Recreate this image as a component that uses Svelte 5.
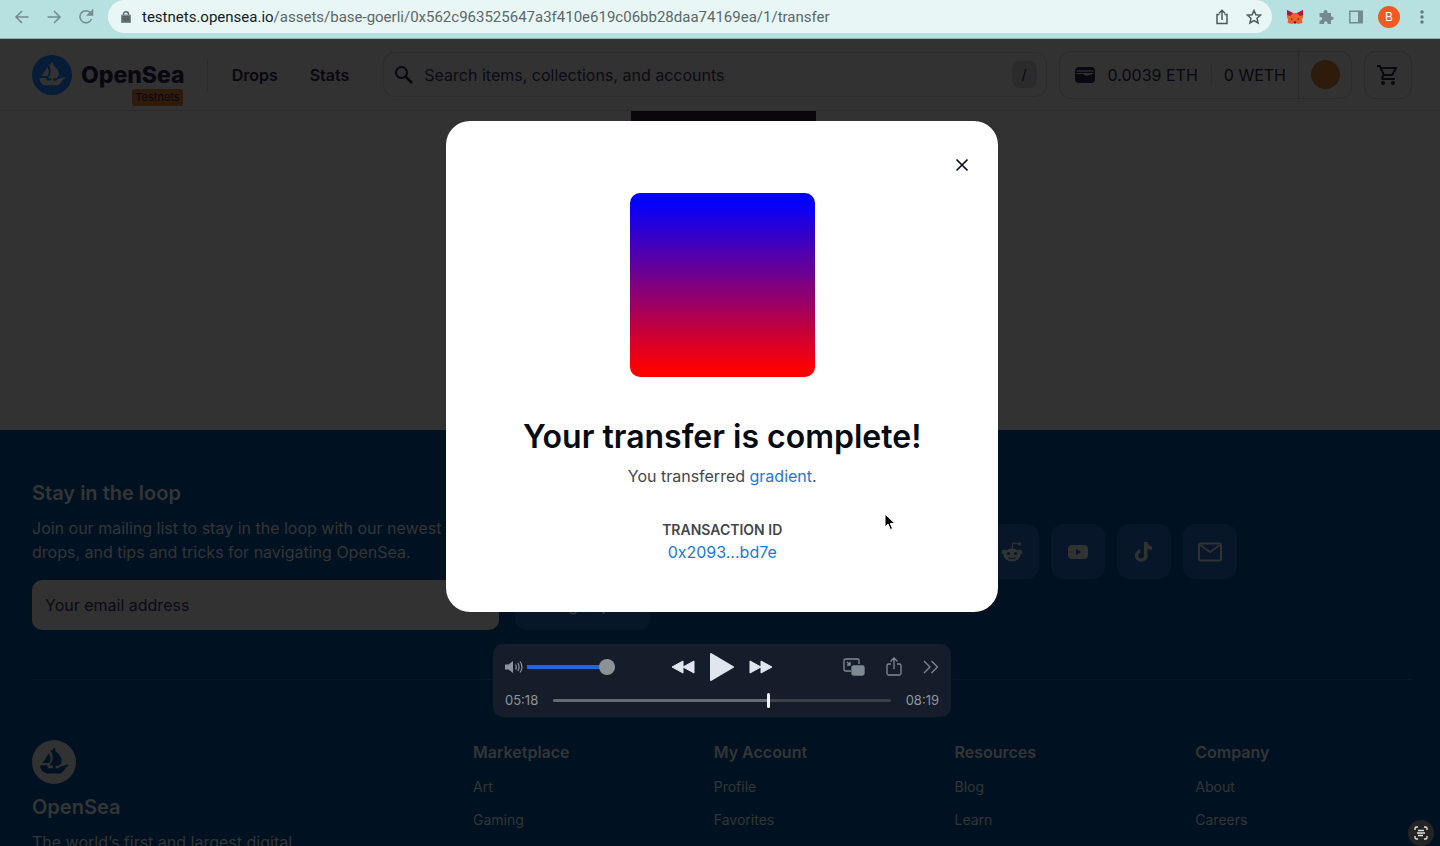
<script>
	const host = 'testnets.opensea.io';
	const path = '/assets/base-goerli/0x562c963525647a3f410e619c06bb28daa74169ea/1/transfer';

	const columns = [
		{ title: 'Marketplace', links: ['Art', 'Gaming'] },
		{ title: 'My Account', links: ['Profile', 'Favorites'] },
		{ title: 'Resources', links: ['Blog', 'Learn'] },
		{ title: 'Company', links: ['About', 'Careers'] },
	];

	let volume = 100;
	let search = '';
	let email = '';
</script>

{#snippet ship()}
	<circle cx="45" cy="45" r="45" fill="var(--disc)" />
	<g fill="var(--boat)">
		<path d="M22.2 46.5l.2-.3 11.7-18.3c.2-.3.6-.2.8.1 1.9 4.4 3.6 9.8 2.8 13.2-.3 1.4-1.3 3.3-2.3 5.1l-.5.7c-.1.1-.2.2-.4.2H22.6c-.4 0-.6-.4-.4-.7z" />
		<path d="M74.4 49.9v2.8c0 .2-.1.3-.2.4-.9.4-4.2 1.9-5.500 3.7-3.4 4.7-6 11.500-11.800 11.500H32.600C24 68.300 17 61.300 17 52.600v-.3c0-.2.2-.4.400-.4H31c.3 0 .5.200.5.500-.1.900.1 1.800.5 2.600.8 1.600 2.400 2.600 4.200 2.600h6.700v-5.200h-6.600c-.3 0-.5-.4-.3-.7l.8-1.100c.6-.9 1.500-2.300 2.400-3.900.6-1.100 1.200-2.200 1.700-3.300.9-2 1.400-4.500 1.400-7 0-5.700-2-11.600-4.800-16.200l5.400 1.500v-2.800c0-1.400 1.100-2.600 2.500-2.600s2.500 1.200 2.500 2.600v4.200c6.800 4.700 12.800 12.100 12.800 19.500 0 4.500-3.500 8.600-5.800 9.900h-6.900v5.200h5.300c1.200 0 3.400-2.100 4.400-3.500l14.600-4.300c.3-.1.500.1.500.4z" />
	</g>
{/snippet}

<div class="browser">
	<nav class="browser-nav" aria-label="Browser">
		<button aria-label="Back">
			<svg width="16" height="16" viewBox="0 0 16 16"><path d="M14.500 8H2M8 2L2 8l6 6" /></svg>
		</button>
		<button aria-label="Forward">
			<svg width="16" height="16" viewBox="0 0 16 16"><path d="M1.500 8H14M8 2l6 6-6 6" /></svg>
		</button>
		<button aria-label="Reload">
			<svg width="16" height="16" viewBox="0 0 16 16"><path d="M13.500 10A6 6 0 1 1 12.600 4l1.400 1.800M14.500 1.500V6H10z" /></svg>
		</button>
	</nav>
	<div class="address">
		<svg class="lock" width="10" height="12" viewBox="0 0 10 12">
			<path d="M2.500 5V3.200a2.500 2.500 0 0 1 5 0V5" fill="none" stroke="#596466" stroke-width="1.400" />
			<rect x=".5" y="4.200" width="9" height="7.300" rx="1" fill="#596466" />
		</svg>
		<div class="url"><b>{host}</b>{path}</div>
		<button aria-label="Share page">
			<svg width="16" height="16" viewBox="0 0 16 16"><path d="M5.500 5.500H3v9h10v-9h-2.500M8 11V1.500M5 4.200l3-3 3 3" /></svg>
		</button>
		<button aria-label="Bookmark this page">
			<svg width="16" height="16" viewBox="0 0 16 16"><path d="M8 1.500l1.900 4.300 4.600.4-3.500 3.100 1.100 4.600L8 11.500l-4.100 2.400L5 9.300 1.500 6.200l4.600-.4z" /></svg>
		</button>
	</div>
	<div class="extensions">
		<button aria-label="Wallet extension">
			<svg width="18" height="16" viewBox="0 0 18 16">
				<path d="M1 1l6 3h4l6-3v7l-1 3 .5 3-4.500 1-2-1H8l-2 1-4.500-1 .5-3-1-3z" fill="#f0602b" stroke="none" />
				<path d="M1 1l6 3-3 3-3-1zM17 1l-6 3 3 3 3-1z" fill="#b3134c" stroke="none" />
				<path d="M5 9l2 1.500-2 .3zM13 9l-2 1.500 2 .3zM7.500 12.500h3L10 14.500H8z" fill="#3b2430" stroke="none" />
			</svg>
		</button>
		<button aria-label="Extensions">
			<svg width="16" height="16" viewBox="0 0 16 16"><path d="M1.500 4h4V3a2 2 0 0 1 4 0v1H13v3.500h.8a1.800 1.800 0 0 1 0 3.600H13V15H9.500v-1a1.700 1.700 0 0 0-3.400 0v1H1.500v-3.600h1a1.700 1.700 0 0 0 0-3.400h-1z" fill="#748a90" stroke="none" /></svg>
		</button>
		<button aria-label="Side panel">
			<svg width="16" height="16" viewBox="0 0 16 16"><path d="M1.800 2.200h12.400v11.600H1.800z" /><path d="M10 2h4.500v12H10z" fill="#748a90" stroke="none" /></svg>
		</button>
		<button class="profile" aria-label="Profile B">B</button>
		<button aria-label="Browser menu">
			<svg width="16" height="16" viewBox="0 0 16 16"><g fill="#627980" stroke="none"><circle cx="8" cy="3" r="1.700" /><circle cx="8" cy="8" r="1.700" /><circle cx="8" cy="13" r="1.700" /></g></svg>
		</button>
	</div>
</div>

<div class="page">
	<header>
		<a class="brand" href="#home">
			<svg class="header-ship" width="40" height="40" viewBox="0 0 90 90">{@render ship()}</svg>
			<span class="wordmark">OpenSea</span>
			<span class="badge">Testnets</span>
		</a>
		<nav class="site-nav" aria-label="Main">
			<a href="#drops">Drops</a>
			<a href="#stats">Stats</a>
		</nav>
		<div class="search">
			<svg width="20" height="20" viewBox="0 0 20 20" fill="none" stroke="#09070f" stroke-width="2"><circle cx="7.500" cy="7.500" r="5.500" /><path d="M11.500 11.500l6.500 6.500" stroke-width="2.500" /></svg>
			<input type="text" aria-label="Search" placeholder="Search items, collections, and accounts" bind:value={search} />
			<kbd>/</kbd>
		</div>
		<div class="wallet">
			<button class="balances">
				<svg width="20" height="16" viewBox="0 0 20 16"><rect width="20" height="16" rx="4" fill="#09070f" /><path d="M1.500 4h17" fill="none" stroke="#323232" stroke-width="1.300" /><path d="M1.500 6h17v.8L13 8.600q-2 .6-3.500-.5Q8.500 7 7 7H1.500z" fill="#323232" /></svg>
				<span>0.0039 ETH</span>
				<span class="weth">0 WETH</span>
			</button>
			<button class="account" aria-label="Account"><span class="avatar"></span></button>
		</div>
		<button class="cart" aria-label="Cart">
			<svg width="24" height="24" viewBox="0 0 24 24" fill="#09070f"><path d="M15.550 13c.75 0 1.410-.41 1.750-1.030l3.580-6.490A.996.996 0 0 0 20.010 4H5.210l-.94-2H1v2h2l3.600 7.590-1.350 2.440C4.520 15.370 5.480 17 7 17h12v-2H7l1.100-2h7.450zM6.160 6h12.150l-2.760 5H8.530L6.160 6zM7 18c-1.100 0-1.990.9-1.990 2S5.900 22 7 22s2-.9 2-2-.9-2-2-2zm10 0c-1.100 0-1.990.9-1.990 2s.89 2 1.990 2 2-.9 2-2-.9-2-2-2z" /></svg>
		</button>
	</header>

	<main><div class="artwork"></div></main>

	<footer>
		<div class="community">
			<form class="newsletter" onsubmit={(event) => event.preventDefault()}>
				<h2>Stay in the loop</h2>
				<p>Join our mailing list to stay in the loop with our newest feature releases, NFT drops, and tips and tricks for navigating OpenSea.</p>
				<div class="signup">
					<input type="email" aria-label="Your email address" placeholder="Your email address" bind:value={email} />
					<button>Sign up</button>
				</div>
			</form>
			<div class="socials">
				<a href="#reddit" aria-label="Reddit">
					<svg width="24" height="24" viewBox="0 0 24 24">
						<path d="M12 9l1-6 6 1" fill="none" stroke="#323232" stroke-width="1.200" />
						<circle cx="19.500" cy="4" r="1.800" />
						<circle cx="4" cy="12" r="2.400" /><circle cx="20" cy="12" r="2.400" />
						<ellipse cx="12" cy="15" rx="8.500" ry="6.500" />
						<g fill="#071628"><circle cx="8.500" cy="13.500" r="1.600" /><circle cx="15.500" cy="13.500" r="1.600" /></g>
						<path d="M8.500 17.500q3.500 2.500 7 0" fill="none" stroke="#071628" stroke-width="1.200" />
					</svg>
				</a>
				<a href="#youtube" aria-label="YouTube">
					<svg width="24" height="24" viewBox="0 0 24 24"><rect x="2" y="5" width="20" height="14" rx="4" /><path d="M10 9l5 3-5 3z" fill="#071628" /></svg>
				</a>
				<a href="#tiktok" aria-label="TikTok">
					<svg width="24" height="24" viewBox="0 0 24 24"><path d="M12 2h3.500c.2 2.500 2 4.300 4.500 4.500V10c-1.700 0-3.200-.5-4.500-1.400V15.500a6.300 6.300 0 1 1-7.200-6.200v3.600a2.900 2.900 0 1 0 3.700 2.700z" /></svg>
				</a>
				<a href="#mail" aria-label="Mail">
					<svg width="26" height="20" viewBox="0 0 26 20" fill="none" stroke="#323232" stroke-width="2"><rect x="2" y="1.500" width="22" height="17" rx="1" /><path d="M3 3l10 7 10-7" /></svg>
				</a>
			</div>
		</div>
		<div class="directory">
			<section class="about">
				<svg class="footer-ship" width="44" height="44" viewBox="0 0 90 90">{@render ship()}</svg>
				<h2>OpenSea</h2>
				<p>The world’s first and largest digital</p>
			</section>
			{#each columns as column}
				<section class="column">
					<h3>{column.title}</h3>
					<ul>
						{#each column.links as link}
							<li><a href="#{link.toLowerCase()}">{link}</a></li>
						{/each}
					</ul>
				</section>
			{/each}
		</div>
	</footer>

	<div class="modal" role="dialog" aria-labelledby="modal-title">
		<button class="close" aria-label="Close">
			<svg width="14" height="14" viewBox="0 0 14 14"><path d="M1.500 1.500l11 11M12.500 1.500l-11 11" stroke="#04111d" stroke-width="1.700" /></svg>
		</button>
		<div class="gradient"></div>
		<h1 id="modal-title">Your transfer is complete!</h1>
		<p>You transferred <a href="#gradient">gradient</a>.</p>
		<h4>TRANSACTION ID</h4>
		<a class="hash" href="#transaction">0x2093...bd7e</a>
	</div>

	<div class="player">
		<div class="controls">
			<div class="volume">
				<svg width="18" height="14" viewBox="0 0 18 14"><path d="M0 4.500h3.500L8 1v12L3.500 9.500H0z" fill="#8d959c" /><path d="M10.500 4.500q1.500 2.500 0 5M12.800 3q2.500 4 0 8M15 1.500q4 5.500 0 11" fill="none" stroke="#8d959c" stroke-width="1.200" /></svg>
				<input type="range" aria-label="Volume" bind:value={volume} />
			</div>
			<div class="transport">
				<button aria-label="Rewind"><svg width="24" height="14" viewBox="0 0 24 14"><path d="M12 1v12L1 7zM23 1v12L12 7z" stroke-width="1" /></svg></button>
				<button aria-label="Play"><svg width="26" height="30" viewBox="0 0 26 30"><path d="M2 2v26l22-13z" stroke-width="2" /></svg></button>
				<button aria-label="Fast forward"><svg width="24" height="14" viewBox="0 0 24 14"><path d="M1 1v12l11-6zM12 1v12l11-6z" stroke-width="1" /></svg></button>
			</div>
			<div class="tools">
				<button aria-label="Picture in picture"><svg width="22" height="18" viewBox="0 0 22 18"><path d="M8 13H2.500A1.500 1.500 0 0 1 1 11.500v-9A1.500 1.500 0 0 1 2.500 1h12A1.500 1.500 0 0 1 16 2.500V6M4 4l3 3M7 4v3H4" /><rect x="9" y="8" width="12" height="9" rx="1.500" fill="#7f8a92" /></svg></button>
				<button aria-label="Share"><svg width="16" height="20" viewBox="0 0 16 20"><path d="M5 7H2.500A1.500 1.500 0 0 0 1 8.500v8A1.500 1.500 0 0 0 2.500 18h11a1.500 1.500 0 0 0 1.500-1.500v-8A1.500 1.500 0 0 0 13.500 7H11M8 12V1M4.500 4.500L8 1l3.500 3.500" /></svg></button>
				<button aria-label="More"><svg width="16" height="14" viewBox="0 0 16 14"><path d="M1 1l6 6-6 6M8.500 1l6 6-6 6" /></svg></button>
			</div>
		</div>
		<div class="timeline">
			<time>05:18</time>
			<div class="track" role="progressbar" aria-label="Elapsed" aria-valuenow="318" aria-valuemax="499"><span style="width: {318 / 499 * 100}%"></span></div>
			<time>08:19</time>
		</div>
	</div>

	<svg class="cursor" width="12" height="18" viewBox="0 0 12 18"><path d="M1 1v13l3-3 2.300 5.500 2.200-1L6.300 10.500H11z" fill="#000" stroke="#fff" /></svg>
	<button class="scan" aria-label="Scan text">
		<svg width="14" height="14" viewBox="0 0 14 14" fill="none" stroke="#e0e0e0" stroke-width="1.400"><path d="M1 4V2.500A1.500 1.500 0 0 1 2.500 1H4M10 1h1.500A1.500 1.500 0 0 1 13 2.500V4M13 10v1.500a1.500 1.500 0 0 1-1.500 1.500H10M4 13H2.500A1.500 1.500 0 0 1 1 11.500V10M4 4.500h6M3 7h8M4 9.500h5" /></svg>
	</button>
</div>

<style>
	:global(body) {
		background: #323232;
		overflow: hidden;
	}

	:global(#app) {
		height: 100vh;
		display: flex;
		flex-direction: column;
		font-family: Inter, "Open Sans", sans-serif;
		overflow: hidden;
	}

	:global(#app *) {
		box-sizing: border-box;
	}

	button, input {
		font: inherit;
		color: inherit;
		border: 0;
		padding: 0;
		background: none;
	}

	button {
		display: flex;
		align-items: center;
		justify-content: center;
	}

	a {
		color: inherit;
		text-decoration: none;
	}

	h1, h2, h3, h4, p, ul {
		margin: 0;
		padding: 0;
		list-style: none;
	}

	svg {
		display: block;
		flex: none;
	}

	.browser {
		height: 39px;
		flex: none;
		display: flex;
		padding: 0 10px 5px 14px;
		background: #b7e0e1;
		border-bottom: 1px solid #8eb0b0;
	}

	.browser svg {
		fill: none;
		stroke: #748a90;
		stroke-width: 1.5;
	}

	.browser-nav {
		display: flex;
		align-items: center;
		gap: 16px;
	}

	.address {
		flex: 1;
		display: flex;
		align-items: center;
		gap: 16px;
		margin: 0 14px;
		padding: 0 10px 0 13px;
		border-radius: 17px;
		background: #e9f6f6;
	}

	.address button svg {
		stroke: #4d595c;
	}

	.address .lock {
		margin-right: -5px;
	}

	.url {
		flex: 1;
		font-family: Roboto, sans-serif;
		font-size: 15px;
		color: #5b686a;
		white-space: nowrap;
	}

	.url b {
		font-weight: 400;
		color: #151b1c;
	}

	.extensions {
		display: flex;
		align-items: center;
		gap: 14px;
	}

	.extensions .profile {
		width: 22px;
		height: 22px;
		border-radius: 50%;
		background: #f05a22;
		color: #fff;
		font-size: 12px;
	}

	.page {
		position: relative;
		flex: 1;
		min-height: 0;
		display: flex;
		flex-direction: column;
	}

	header {
		height: 72px;
		flex: none;
		display: flex;
		align-items: center;
		padding: 0 28px 0 32px;
		border-bottom: 1px solid #2c2c2c;
		color: #09070f;
	}

	.brand {
		position: relative;
		display: flex;
		align-items: center;
		gap: 9px;
		padding-right: 22px;
		border-right: 1px solid #2b2b2b;
		height: 32px;
	}

	.header-ship {
		--disc: #071c36;
		--boat: #323232;
	}

	.wordmark {
		font-size: 23px;
		font-weight: 800;
	}

	.badge {
		position: absolute;
		right: 24px;
		top: 30px;
		padding: 0 3px;
		border-radius: 3px;
		background: #2f1b0c;
		font-size: 11px;
		line-height: 17px;
	}

	.site-nav {
		display: flex;
		gap: 32px;
		padding: 0 34px 0 24px;
		font-size: 16px;
		font-weight: 600;
	}

	.search {
		flex: 1;
		display: flex;
		align-items: center;
		gap: 10px;
		height: 45px;
		margin-right: 12px;
		padding: 0 9px 0 10px;
		border: 1px solid #2c2c2c;
		border-radius: 12px;
	}

	.search input {
		flex: 1;
		min-width: 0;
		font-size: 16px;
	}

	input::placeholder {
		color: #0c0a14;
		opacity: 1;
	}

	kbd {
		width: 25px;
		border-radius: 8px;
		background: #2b2b2b;
		font: 14px/27px Inter, sans-serif;
		text-align: center;
	}

	.wallet {
		display: flex;
		height: 48px;
		margin-right: 12px;
		border: 1px solid #2b2b2b;
		border-radius: 12px;
		font-size: 16px;
	}

	.balances {
		gap: 13px;
		padding: 0 12px 0 15px;
	}

	.weth {
		padding-left: 12px;
		border-left: 1px solid #2b2b2b;
	}

	.account {
		width: 53px;
		border-left: 1px solid #2b2b2b;
	}

	.avatar {
		width: 29px;
		height: 29px;
		border-radius: 50%;
		background: #2f1b0c;
	}

	.cart {
		width: 48px;
		height: 48px;
		border: 1px solid #2b2b2b;
		border-radius: 12px;
	}

	main {
		height: 319px;
		flex: none;
		padding-left: 6px;
	}

	.artwork {
		width: 185px;
		height: 30px;
		margin: 0 auto;
		background: #0a060c;
	}

	footer {
		flex: 1 0 auto;
		padding: 50px 28px 0 32px;
		background: #001222;
		color: #353535;
	}

	.community {
		display: flex;
		gap: 335px;
		padding-bottom: 49px;
		border-bottom: 1px solid #071829;
	}

	.newsletter {
		flex: 0 1 618px;
	}

	h2 {
		font-size: 20px;
		line-height: 26px;
		font-weight: 600;
	}

	.newsletter p {
		margin: 10px 0 16px;
		font-size: 16px;
		line-height: 24px;
	}

	.signup {
		display: flex;
		gap: 16px;
	}

	.signup input {
		flex: 1;
		height: 50px;
		padding: 0 13px;
		border-radius: 10px;
		background: #323232;
		font-size: 16px;
	}

	.signup button {
		width: 135px;
		border-radius: 10px;
		background: #071628;
		font-weight: 600;
	}

	.socials {
		display: flex;
		gap: 12px;
		padding-top: 44px;
	}

	.socials a {
		width: 54px;
		height: 55px;
		display: flex;
		align-items: center;
		justify-content: center;
		border-radius: 12px;
		background: #071628;
		fill: #323232;
	}

	.directory {
		display: flex;
		margin-right: -24px;
		padding-top: 60px;
	}

	.about {
		flex: 0 0 441px;
	}

	.footer-ship {
		--disc: #323232;
		--boat: #001222;
	}

	.about h2 {
		margin: 10px 0;
	}

	.about p {
		font-size: 16px;
		line-height: 24px;
	}

	.column {
		flex: 1;
		font-size: 14px;
	}

	h3 {
		font-size: 16px;
		line-height: 24px;
		font-weight: 600;
	}

	li {
		margin: 13px 0;
		line-height: 20px;
	}

	.modal {
		position: absolute;
		top: 82px;
		left: 31%;
		right: 442px;
		display: flex;
		flex-direction: column;
		align-items: center;
		padding: 72px 32px 48px;
		border-radius: 24px;
		background: #fff;
		color: #42474d;
		font-size: 16px;
		line-height: 24px;
	}

	.modal a {
		color: #2079d6;
	}

	.close {
		position: absolute;
		top: 32px;
		right: 24px;
		width: 24px;
		height: 24px;
	}

	.gradient {
		width: 185px;
		height: 184px;
		border-radius: 10px;
		background: linear-gradient(#00f 4%, #f00 96%);
	}

	h1 {
		margin: 40px 0 7px;
		font-size: 32px;
		line-height: 40px;
		font-weight: 600;
		color: #060a12;
	}

	h4 {
		margin-top: 32px;
		font-size: 14px;
		line-height: 20px;
		font-weight: 600;
	}

	.player {
		position: absolute;
		top: 605px;
		left: 493px;
		width: 458px;
		padding: 8px 12px 7px;
		border-radius: 10px;
		background: #151d2b;
		color: #90969d;
	}

	.controls {
		display: grid;
		grid-template-columns: 1fr auto 1fr;
		align-items: center;
	}

	.volume, .transport, .tools, .timeline {
		display: flex;
		align-items: center;
	}

	.volume {
		gap: 4px;
	}

	.volume input {
		appearance: none;
		width: 88px;
		height: 16px;
		margin: 0;
		background: linear-gradient(#1c67dc, #1c67dc) center / 100% 4px no-repeat;
	}

	.volume input::-webkit-slider-thumb {
		appearance: none;
		width: 16px;
		height: 16px;
		border-radius: 50%;
		background: #8d9294;
	}

	.transport {
		gap: 14px;
		fill: #dfe6ee;
		stroke: #dfe6ee;
		stroke-linejoin: round;
	}

	.tools {
		justify-content: flex-end;
		gap: 21px;
		fill: none;
		stroke: #7f8a92;
		stroke-width: 1.3;
	}

	.timeline {
		gap: 15px;
		padding-top: 8px;
		font-size: 13px;
		line-height: 20px;
	}

	.track {
		flex: 1;
		height: 3px;
		border-radius: 2px;
		background: #3b4147;
	}

	.track span {
		position: relative;
		display: block;
		height: 3px;
		border-radius: 2px;
		background: #666c74;
	}

	.track span::after {
		content: "";
		position: absolute;
		top: -6px;
		right: -2px;
		width: 3px;
		height: 15px;
		border-radius: 2px;
		background: #f0f3f6;
	}

	.cursor {
		position: absolute;
		top: 474px;
		left: 884px;
	}

	.scan {
		position: absolute;
		right: 6px;
		bottom: 0;
		width: 26px;
		height: 26px;
		border-radius: 50%;
		background: #242424;
	}
</style>
